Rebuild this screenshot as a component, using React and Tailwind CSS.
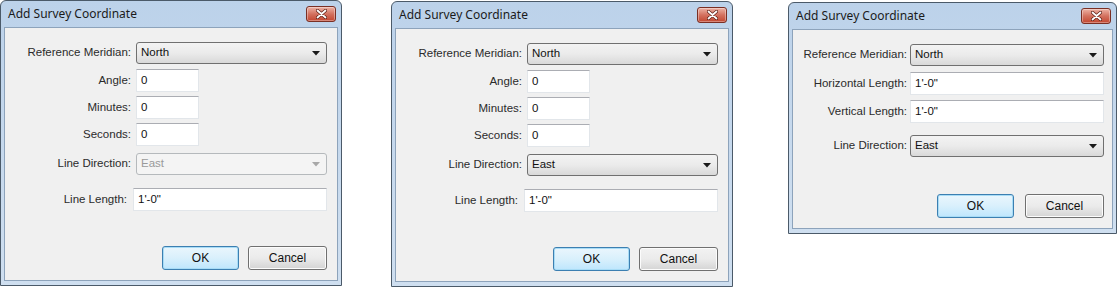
import React from "react";

const LABEL = "text-[11.5px] text-[#2b2b2b] leading-none whitespace-nowrap";

function CloseButton() {
  return (
    <div className="w-[30px] h-[16px] rounded-[3px] border border-[#7a2f24] bg-gradient-to-b from-[#ecb2a5] via-[#d3715f] to-[#c2452f] flex items-center justify-center shadow-[inset_0_0_0_1px_rgba(255,255,255,0.35)]">
      <svg width="11" height="10" viewBox="0 0 11 10">
        <path d="M1.5 1.5 L9.5 8.5 M9.5 1.5 L1.5 8.5" stroke="#5a1d14" strokeWidth="3.2" strokeLinecap="round" />
        <path d="M1.5 1.5 L9.5 8.5 M9.5 1.5 L1.5 8.5" stroke="#ffffff" strokeWidth="1.8" strokeLinecap="round" />
      </svg>
    </div>
  );
}

function Combo({ value, disabled, className = "" }) {
  return (
    <div
      className={`h-[22px] rounded-[3px] border flex items-center justify-between pl-[4px] pr-[6px] ${
        disabled
          ? "border-[#b5b9bc] bg-[#f4f4f4] text-[#9a9a9a]"
          : "border-[#707070] bg-gradient-to-b from-[#f3f3f3] via-[#ebebeb] to-[#d9d9d9] text-[#111]"
      } ${className}`}
    >
      <span className="text-[11.5px] leading-none">{value}</span>
      <svg width="8" height="5" viewBox="0 0 8 5">
        <path d="M0 0 L8 0 L4 4.5 Z" fill={disabled ? "#a8a8a8" : "#1a1a1a"} />
      </svg>
    </div>
  );
}

function TextBox({ value, className = "" }) {
  return (
    <div
      className={`h-[23px] bg-white border border-[#e2e6ea] border-t-[#abadb3] flex items-center pl-[4px] text-[11.5px] text-[#111] leading-none ${className}`}
    >
      {value}
    </div>
  );
}

function Buttons({ gap }) {
  return (
    <div className={`flex justify-end ${gap}`}>
      <div className="w-[77px] h-[24px] rounded-[3px] border border-[#3c7fb1] bg-gradient-to-b from-[#eaf6fd] via-[#d9f0fc] to-[#bee6fd] shadow-[inset_0_0_0_1px_#a8dcf6] flex items-center justify-center text-[12px] text-[#111]">
        OK
      </div>
      <div className="w-[79px] h-[24px] rounded-[3px] border border-[#707070] bg-gradient-to-b from-[#f2f2f2] via-[#ebebeb] to-[#d4d4d4] shadow-[inset_0_0_0_1px_#fcfcfc] flex items-center justify-center text-[12px] text-[#111]">
        Cancel
      </div>
    </div>
  );
}

function Window({ className = "", children }) {
  return (
    <div className={`flex flex-col border border-[#4b5a69] rounded-t-[6px] bg-gradient-to-b from-[#bcd2ea] to-[#cfdff0] px-[3px] pb-[4px] ${className}`}>
      <div className="h-[26px] flex items-center justify-between pl-[4px] pr-[2px] shrink-0">
        <span className="text-[12px] text-[#1b1b1b]" style={{ fontFamily: "'Noto Sans', sans-serif" }}>
          Add Survey Coordinate
        </span>
        <CloseButton />
      </div>
      <div className="flex-1 bg-[#f0f0f0] border border-[#8da3bb]">{children}</div>
    </div>
  );
}

function Row({ label, labelW, children, className = "" }) {
  return (
    <div className={`flex items-center ${className}`}>
      <div className={`${labelW} shrink-0 text-right ${LABEL}`}>{label}</div>
      {children}
    </div>
  );
}

function AngleDialog({ lineEnabled, className }) {
  return (
    <Window className={`w-[342px] h-[286px] ${className}`}>
      <div className="pt-[14px] pl-[20px] pr-[10px]">
        <Row label="Reference Meridian:" labelW="w-[106px]">
          <Combo value="North" className="ml-[5px] flex-1" />
        </Row>
        <Row label="Angle:" labelW="w-[106px]" className="mt-[5px]">
          <TextBox value="0" className="ml-[5px] w-[63px]" />
        </Row>
        <Row label="Minutes:" labelW="w-[106px]" className="mt-[4px]">
          <TextBox value="0" className="ml-[5px] w-[63px]" />
        </Row>
        <Row label="Seconds:" labelW="w-[106px]" className="mt-[4px]">
          <TextBox value="0" className="ml-[5px] w-[63px]" />
        </Row>
        <Row label="Line Direction:" labelW="w-[106px]" className="mt-[7px]">
          <Combo value="East" disabled={!lineEnabled} className="ml-[5px] flex-1" />
        </Row>
        <Row label="Line Length:" labelW="w-[102px]" className="mt-[13px]">
          <TextBox value={"1'-0\""} className="ml-[6px] flex-1" />
        </Row>
        <div className="mt-[35px]">
          <Buttons gap="gap-[9px]" />
        </div>
      </div>
    </Window>
  );
}

function LengthDialog({ className }) {
  return (
    <Window className={`w-[329px] h-[232px] ${className}`}>
      <div className="pt-[14px] pl-[10px] pr-[8px]">
        <Row label="Reference Meridian:" labelW="w-[104px]">
          <Combo value="North" className="ml-[3px] flex-1" />
        </Row>
        <Row label="Horizontal Length:" labelW="w-[104px]" className="mt-[6px]">
          <TextBox value={"1'-0\""} className="ml-[3px] flex-1" />
        </Row>
        <Row label="Vertical Length:" labelW="w-[104px]" className="mt-[5px]">
          <TextBox value={"1'-0\""} className="ml-[3px] flex-1" />
        </Row>
        <Row label="Line Direction:" labelW="w-[104px]" className="mt-[12px]">
          <Combo value="East" className="ml-[3px] flex-1" />
        </Row>
        <div className="mt-[37px]">
          <Buttons gap="gap-[11px]" />
        </div>
      </div>
    </Window>
  );
}

export default function App() {
  return (
    <div
      className="w-[1119px] h-[287px] bg-white flex items-start overflow-hidden"
      style={{ fontFamily: "'Liberation Sans', sans-serif" }}
    >
      <AngleDialog lineEnabled={false} />
      <AngleDialog lineEnabled className="ml-[49px] mt-[1px]" />
      <LengthDialog className="ml-[55px] mt-[2px]" />
    </div>
  );
}
